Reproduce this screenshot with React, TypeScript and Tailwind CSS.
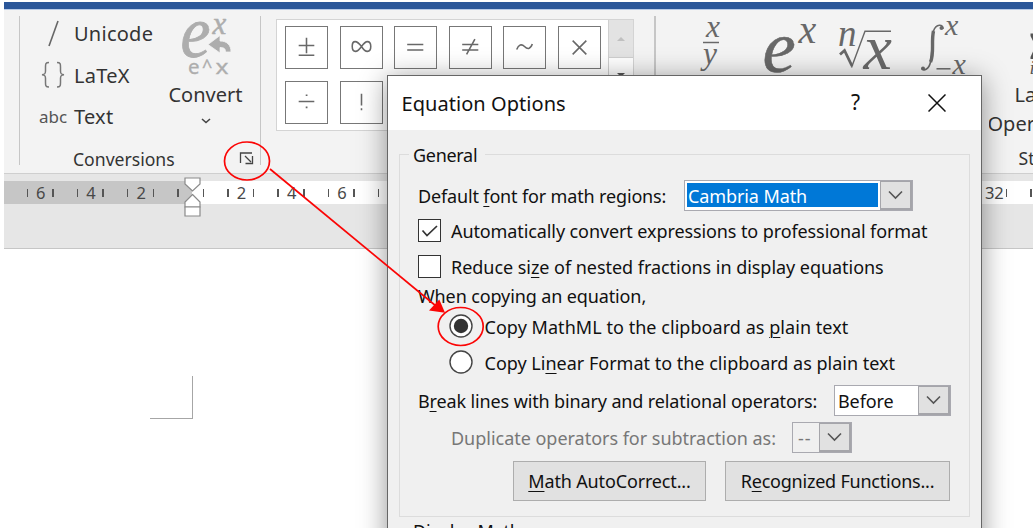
import type { ReactNode } from "react";
import clsx from "clsx";

const SERIF = "Liberation Serif, serif";

function Key({ children }: { children: ReactNode }) {
  return <span className="underline decoration-1 underline-offset-[3px]">{children}</span>;
}

function Separator() {
  return <div className="mt-[6px] h-[149px] w-[1.5px] shrink-0 bg-[#c6c6c6]" />;
}

function ConvertIcon() {
  return (
    <svg width="50" height="60" viewBox="180 16 50 60" fill="#adadad">
      <text x="179.500" y="57" fontFamily={SERIF} fontStyle="italic" fontSize="74" stroke="#adadad" strokeWidth="0.8" textLength="30" lengthAdjust="spacingAndGlyphs">e</text>
      <text x="211.500" y="34" fontFamily={SERIF} fontStyle="italic" fontSize="31" stroke="#adadad" strokeWidth="0.5">x</text>
      <path d="M207 44.5 219 35.5V41C226 41 230 45 230 52H224.500C224.500 48.500 223 47.500 219 47.500V53Z" stroke="#f3f3f3" strokeWidth="0.8" />
      <g fontFamily="Noto Sans, sans-serif" fontSize="20.500" stroke="#adadad" strokeWidth="0.3">
        <text x="187" y="73.500">e</text>
        <text x="201" y="73" fontSize="18">^</text>
        <text x="214.500" y="73.500" textLength="13" lengthAdjust="spacingAndGlyphs">x</text>
      </g>
    </svg>
  );
}

function Conversions() {
  const rows = [
    {
      label: "Unicode",
      icon: (
        <svg width="14" height="28" viewBox="0 0 14 28">
          <path d="M3 27 12 2" stroke="#666" strokeWidth="1.6" fill="none" />
        </svg>
      ),
    },
    {
      label: "LaTeX",
      icon: (
        <svg width="24" height="28" viewBox="0 0 24 28" fill="none" stroke="#777" strokeWidth="1.5">
          <path d="M8 1.500C4.500 1.500 4.500 3 4.500 6V10C4.500 12.500 4 13.500 1 13.800 4 14 4.500 15 4.500 17.500V21.500C4.500 24.500 4.500 26 8 26" />
          <path d="M16 1.500C19.500 1.500 19.500 3 19.500 6V10C19.500 12.500 20 13.500 23 13.800 20 14 19.500 15 19.500 17.500V21.500C19.500 24.500 19.500 26 16 26" />
        </svg>
      ),
    },
    { label: "Text", icon: <span className="text-[17px] text-[#555]">abc</span> },
  ];
  return (
    <div className="flex w-[239.500px] shrink-0 flex-col">
      <div className="flex h-[136px]">
        <div className="flex w-[140px] flex-col pt-[3px] pl-[18px]">
          {rows.map((r) => (
            <div key={r.label} className="flex h-[41.500px] items-center gap-[6px]">
              <div className="flex w-[30px] justify-center pb-px">{r.icon}</div>
              <span className="pt-px text-[20px] tracking-[0.250px] text-[#333]">{r.label}</span>
            </div>
          ))}
        </div>
        <div className="flex w-[91px] flex-col items-center pt-[6px]">
          <ConvertIcon />
          <span className="mt-[6px] text-[20px] leading-[26px] text-[#333]">Convert</span>
          <svg className="mt-[10px]" width="10" height="6" viewBox="0 0 10 6">
            <path d="M1 1 5 4.500 9 1" stroke="#444" strokeWidth="1.600" fill="none" />
          </svg>
        </div>
      </div>
      <div className="flex h-[26px] items-center justify-between pr-[5px] pl-[53px]">
        <span className="text-[17.600px] text-[#333]">Conversions</span>
        <svg className="mb-[2px]" width="16" height="15" viewBox="0 0 16 15" fill="none" stroke="#444" strokeWidth="1.300">
          <path d="M1.500 12V2H13M6 5 12 11M13.500 5V12.500H6.500" />
        </svg>
      </div>
    </div>
  );
}

const SYMBOLS = ["±", "∞", "=", "≠", "~", "×", "÷", "!"];

const STROKES: Record<string, ReactNode> = {
  "±": <path d="M21 11V27M13 19H29M13 29H29" />,
  "∞": <path d="M21 20C18 16 16.500 15 14.500 15 12.500 15 11.500 17 11.500 19.800 11.500 23 12.500 25 14.800 25 17 25 18.500 23.500 21 20 23.500 16.500 25 15 27 15 29.200 15 30.500 17 30.500 20 30.500 23 29.200 25 27 25 25 25 23.500 24 21 20Z" />,
  "=": <path d="M12.500 18H29M12.500 23.500H29" />,
  "≠": <path d="M12.500 18H29M12.500 23.500H29M25.500 12.500 17 28" />,
  "~": <path d="M13 23C15 18 18 17 21 20S27 23 29 17.500" />,
  "×": <path d="M14 14 28 28M28 14 14 28" />,
  "÷": <path d="M13 20H29M20.200 13.500H22M20.200 26H22" />,
  "!": <path d="M21 12V24M21 27V29" />,
};

function Gallery() {
  return (
    <div className="mt-[9px] flex h-[112px] w-[358px] border border-[#d4d4d4] bg-white">
      <div className="grid w-[331px] grid-cols-[repeat(6,43px)] content-start gap-x-[11.500px] gap-y-[12px] pt-[6px] pl-[8px]">
        {SYMBOLS.map((s) => (
          <div key={s} aria-label={s} className="h-[43px] w-[43px] border border-[#777]">
            <svg width="41" height="41" viewBox="0 0 42 42" fill="none" stroke="#686868" strokeWidth="1.600">
              {STROKES[s]}
            </svg>
          </div>
        ))}
      </div>
      <div className="flex flex-1 flex-col border-l border-[#cfcfcf]">
        <div className="flex h-[38px] items-center justify-center border-b border-[#cfcfcf] bg-[#e3e3e3]">
          <div className="h-0 w-0 border-x-[4px] border-b-[4px] border-x-transparent border-b-[#c0c0c0]" />
        </div>
        <div className="flex h-[34px] items-center justify-center">
          <div className="h-0 w-0 border-x-[4px] border-t-[4px] border-x-transparent border-t-[#555]" />
        </div>
      </div>
    </div>
  );
}

function Structures() {
  return (
    <div className="flex flex-1 pl-[1px]">
      <svg className="shrink-0" width="332" height="70" viewBox="656 10 332 70" fill="#686868" fontFamily={SERIF} fontStyle="italic">
        <text x="705" y="37" fontSize="31.500">x</text>
        <path d="M702 42.500H718" stroke="#686868" strokeWidth="1.500" />
        <text x="702" y="64" fontSize="31.500">y</text>
        <text x="761.500" y="71.500" fontSize="75" stroke="#686868" strokeWidth="0.5">e</text>
        <text x="797.500" y="43" fontSize="40">x</text>
        <text x="837" y="46" fontSize="37">n</text>
        <text x="862.500" y="68.500" fontSize="64">x</text>
        <path d="M839 54.500 843.500 50.500 851 66" fill="none" stroke="#686868" strokeWidth="2.800" />
        <path d="M850.500 67.500 864 31.200H890" fill="none" stroke="#686868" strokeWidth="1.400" />
        <path d="M942 29C942.500 24 935 23.500 932.500 31 930.500 38 931.500 53 929.500 62 928 69.500 922 72 921 68" fill="none" stroke="#686868" strokeWidth="1.600" />
        <path d="M932.500 31C930 42 933.500 53 929.500 62" fill="none" stroke="#686868" strokeWidth="3.400" />
        <circle cx="940.500" cy="28" r="2" />
        <circle cx="922" cy="68.500" r="2" />
        <text x="944" y="35" fontSize="30">x</text>
        <path d="M935.500 68.800H949.500" stroke="#686868" strokeWidth="1.500" />
        <text x="951.500" y="73.500" fontSize="30">x</text>
      </svg>
      <div className="flex flex-col overflow-hidden text-[20px] whitespace-nowrap text-[#333]">
        <svg className="shrink-0" width="45" height="70" viewBox="988 10 45 70" fill="#555">
          <path d="M1029.500 33.500H1040V37H1034L1037 46 1033 55H1040V59H1029.500V57L1034.500 46 1029.500 36Z" />
          <text x="1028.500" y="74" fontFamily={SERIF} fontStyle="italic" fontSize="19">i</text>
        </svg>
        <span className="pl-[26px] leading-[29px]">La</span>
        <span className="-ml-px leading-[29px]">Oper</span>
        <span className="mt-[7px] pl-[30px] text-[17.600px] leading-[26px]">St</span>
      </div>
    </div>
  );
}

// Positions 8 to 30 of the scale are covered by the dialog, so they carry no number.
const RULER_CELLS = Array.from({ length: 21 }, (_, i) => Math.abs(i - 3) * 2);

function Ruler() {
  return (
    <div className="relative flex h-[75px] flex-col border-b border-[#c6c6c6] bg-[#e6e6e6] pt-[7px]">
      <div className="flex h-[23px] overflow-hidden bg-[linear-gradient(90deg,#c6c6c6_188px,#fff_188px)] pl-[11px]">
        {RULER_CELLS.map((n, i) => (
          <div key={i} className="flex w-[50.200px] shrink-0 items-center justify-between px-[11.500px] text-[16.500px] leading-[23px] text-[#484848]">
            <i className="h-[8px] w-[1.500px] bg-[#555]" />
            {n > 0 && (n < 8 || n > 30) && <span className="-mr-[5px] -ml-[4px] tracking-[-0.3px]">{n}</span>}
            <i className="h-[8px] w-[1.500px] bg-[#555]" />
          </div>
        ))}
      </div>
      <svg className="absolute top-[3px] left-[180px]" width="17" height="41" viewBox="0 0 17 41" fill="#fff" stroke="#8a8a8a" strokeWidth="1.200">
        <path d="M1 1H16V7L8.500 14 1 7Z" />
        <path d="M8.500 17.500 16 25V30H1V25Z" />
        <path d="M1 30H16V39H1Z" />
      </svg>
    </div>
  );
}

function Combo({ value, width, selected, disabled }: { value: string; width: string; selected?: boolean; disabled?: boolean }) {
  return (
    <div className={clsx("flex h-[31px] border border-[#a9a9b0]", width, disabled ? "bg-[#f0f0f0] text-[#777]" : "bg-white")}>
      <div className="flex flex-1 p-[2px] pb-[3px]">
        <span className={clsx("flex flex-1 items-center pt-px leading-[24px] tracking-[-0.1px]", selected ? "bg-[#0078d7] pl-[1px] text-white" : "pl-[1px]", disabled && "pl-[3px] tracking-[1px]")}>
          {value}
        </span>
      </div>
      <div className="flex w-[32px] items-center justify-center border-2 border-t border-l border-[#a5a5aa] bg-[#e1e1e1]">
        <svg width="15" height="10" viewBox="0 0 15 10">
          <path d="M1 1.500 7.500 8 14 1.500" stroke="#555" strokeWidth="1.600" fill="none" />
        </svg>
      </div>
    </div>
  );
}

function CheckRow({ checked, children }: { checked?: boolean; children: ReactNode }) {
  return (
    <div className="-ml-[0.5px] flex h-[36px] items-center gap-[10.500px]">
      <div className="mb-[2px] h-[23px] w-[23px] border-[1.500px] border-[#333] bg-white">
        {checked && (
          <svg width="21" height="21" viewBox="0 0 21 21">
            <path d="M3.500 10.500 8 15.500 18 6" stroke="#333" strokeWidth="1.700" fill="none" />
          </svg>
        )}
      </div>
      {children}
    </div>
  );
}

function RadioRow({ checked, children }: { checked?: boolean; children: ReactNode }) {
  return (
    <div className="flex h-[36px] items-center gap-[11.500px] pl-[31px]">
      <svg className="mb-[2px]" width="24" height="24" viewBox="0 0 24 24">
        <circle cx="12" cy="12" r="11" fill="#fff" stroke="#444" strokeWidth="1.400" />
        {checked && <circle cx="12" cy="12" r="7.200" fill="#333" />}
      </svg>
      {children}
    </div>
  );
}

function Dialog() {
  return (
    <div className="absolute top-[73px] left-[383px] flex h-[520px] w-[595px] flex-col border-[1.500px] border-[#666] bg-[#f0f0f0] text-[18px] whitespace-nowrap text-[#111] shadow-[0_4px_26px_rgba(0,0,0,0.42)]">
      <div className="flex h-[54px] shrink-0 items-center bg-white pr-[35px] pl-[13.500px] text-[20px]">
        <span className="flex-1 pt-px tracking-[0.05px]">Equation Options</span>
        <span className="mr-[68px] text-[21px]">?</span>
        <svg width="18" height="18" viewBox="0 0 18 18">
          <path d="M.5.5 17.500 17.500M17.500.5.5 17.500" stroke="#111" strokeWidth="1.500" />
        </svg>
      </div>
      <div className="mt-[24px] ml-[11px] flex h-[363px] w-[571px] shrink-0 flex-col border border-[#dcdcdc] pl-[18px]">
        <span className="-mt-[14px] -ml-[9px] w-[76px] bg-[#f0f0f0] pl-[4px] text-[18px] leading-[28px] tracking-[-0.3px]">General</span>
        <div className="mt-[11px] flex h-[31px] items-center">
          <span className="w-[266px] pt-px tracking-[-0.150px]">Default <Key>f</Key>ont for math regions:</span>
          <Combo value="Cambria Math" width="w-[229px]" selected />
        </div>
        <div className="mt-[2px]">
          <CheckRow checked><span className="pt-px tracking-[-0.100px]">Automatically convert expressions to professional format</span></CheckRow>
          <CheckRow><span className="pt-px tracking-[-0.040px]">Reduce si<Key>z</Key>e of nested fractions in display equations</span></CheckRow>
        </div>
        <div className="h-[24px] leading-[23px] tracking-[-0.120px]">When copying an equation,</div>
        <RadioRow checked><span className="pt-px tracking-[0.050px]">Copy MathML to the clipboard as <Key>p</Key>lain text</span></RadioRow>
        <RadioRow><span className="pt-px">Copy Li<Key>n</Key>ear Format to the clipboard as plain text</span></RadioRow>
        <div className="mt-[4px] flex h-[31px] items-center">
          <span className="w-[416px] pt-px tracking-[-0.130px]">B<Key>r</Key>eak lines with binary and relational operators:</span>
          <Combo value="Before" width="w-[117px]" />
        </div>
        <div className="mt-[6px] flex h-[31px] items-center pl-[33px]">
          <span className="w-[341px] pt-[2px] tracking-[-0.020px] text-[#777]">Duplicate operators for subtraction as:</span>
          <Combo value="--" width="w-[60px]" disabled />
        </div>
        <div className="mt-[8px] flex h-[40px] gap-[19px] pl-[95px]">
          <button className="w-[193px] border border-[#adadad] bg-[#e1e1e1] tracking-[-0.150px]"><Key>M</Key>ath AutoCorrect...</button>
          <button className="w-[225px] border border-[#adadad] bg-[#e1e1e1] tracking-[-0.220px]">R<Key>e</Key>cognized Functions...</button>
        </div>
      </div>
      <span className="ml-[25px] leading-[28px] tracking-[-0.200px]">Display Math</span>
    </div>
  );
}

function Annotation() {
  return (
    <svg className="absolute top-0 left-0" width="1029" height="526" viewBox="4 2 1029 526" fill="none" stroke="#fb0505" strokeWidth="1.700">
      <ellipse cx="247" cy="161" rx="22.500" ry="19" />
      <path d="M270 169 436 306" />
      <path d="M445 312.700 429 310.500 439.300 299.500Z" fill="#fb0505" stroke="none" />
      <ellipse cx="460.700" cy="326.500" rx="22.500" ry="19" />
    </svg>
  );
}

export default function App() {
  return (
    <div className="h-[530px] w-[1033px] overflow-hidden bg-white pt-[2px] pl-[4px] font-['Noto_Sans',sans-serif]">
      <div className="relative h-[526px] overflow-hidden bg-white">
        <div className="h-[8px] border-b border-[#b9cbe8] bg-[#2b579a]" />
        <div className="flex h-[164px] overflow-hidden border-b border-[#cfcfcf] bg-[#f3f3f3] pl-[14.500px]">
          <Separator />
          <Conversions />
          <Separator />
          <div className="w-[393px] shrink-0 pl-[15px]">
            <Gallery />
          </div>
          <Separator />
          <Structures />
        </div>
        <Ruler />
        <div className="mt-[127px] ml-[146px] h-[43px] w-[43px] border-r-[1.500px] border-b-[1.500px] border-[#a6a6a6]" />
        <Dialog />
        <Annotation />
      </div>
    </div>
  );
}
